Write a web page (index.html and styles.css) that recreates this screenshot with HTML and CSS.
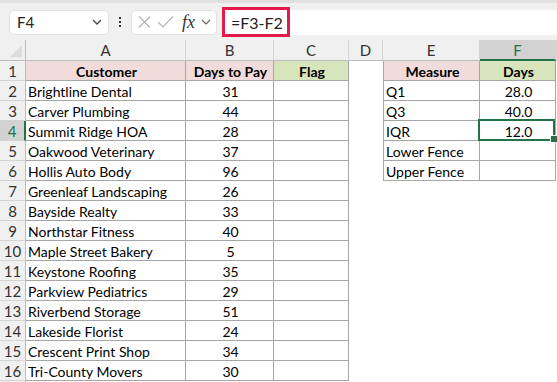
FILE: index.html
```html
<!DOCTYPE html>
<html>
<head lang="en">
    <meta charset="UTF-8">
    <title>IQR</title>
    <link rel="stylesheet" href="styles.css">
</head>
<body>
<div class="bar">
    <div class="namebox">
        <span>F4</span>
        <svg class="chev" width="10" height="6" viewBox="0 0 10 6"><path d="M1 1l4 4 4-4" fill="none" stroke="#444" stroke-width="1.3"/></svg>
    </div>
    <div class="dots"><i></i><i></i><i></i></div>
    <div class="fxbox">
        <svg width="13" height="12" viewBox="0 0 13 12"><path d="M1 0.5l11 11M12 0.5l-11 11" stroke="#b4b4b4" stroke-width="1.2"/></svg>
        <svg width="17" height="12" viewBox="0 0 17 12"><path d="M1 6l5 5 10-10.5" fill="none" stroke="#b4b4b4" stroke-width="1.2"/></svg>
        <span class="fx">fx</span>
        <svg class="chev" width="10" height="6" viewBox="0 0 10 6"><path d="M1 1l4 4 4-4" fill="none" stroke="#666" stroke-width="1.2"/></svg>
    </div>
    <div class="formula">
        <span class="hl">=F3-F2</span>
    </div>
</div>

<div class="sheet">
    <div class="corner"></div>
    <div class="ch">A</div><div class="ch">B</div><div class="ch">C</div><div class="ch">D</div><div class="ch">E</div><div class="ch sel">F</div><div class="ch"></div>

    <div class="rh">1</div>
    <div class="b hp">Customer</div><div class="b hp">Days to Pay</div><div class="b hg">Flag</div><div></div>
    <div class="b bl hp">Measure</div><div class="b hg">Days</div><div></div>

    <div class="rh">2</div>
    <div class="b">Brightline Dental</div><div class="b num">31</div><div class="b"></div><div></div>
    <div class="b bl">Q1</div><div class="b num">28.0</div><div></div>

    <div class="rh">3</div>
    <div class="b">Carver Plumbing</div><div class="b num">44</div><div class="b"></div><div></div>
    <div class="b bl">Q3</div><div class="b num">40.0</div><div></div>

    <div class="rh sel">4</div>
    <div class="b">Summit Ridge HOA</div><div class="b num">28</div><div class="b"></div><div></div>
    <div class="b bl">IQR</div><div class="b num active">12.0</div><div></div>

    <div class="rh">5</div>
    <div class="b">Oakwood Veterinary</div><div class="b num">37</div><div class="b"></div><div></div>
    <div class="b bl">Lower Fence</div><div class="b num"></div><div></div>

    <div class="rh">6</div>
    <div class="b">Hollis Auto Body</div><div class="b num">96</div><div class="b"></div><div></div>
    <div class="b bl">Upper Fence</div><div class="b num"></div><div></div>

    <div class="rh">7</div>
    <div class="b">Greenleaf Landscaping</div><div class="b num">26</div><div class="b"></div><div></div><div></div><div></div><div></div>

    <div class="rh">8</div>
    <div class="b">Bayside Realty</div><div class="b num">33</div><div class="b"></div><div></div><div></div><div></div><div></div>

    <div class="rh">9</div>
    <div class="b">Northstar Fitness</div><div class="b num">40</div><div class="b"></div><div></div><div></div><div></div><div></div>

    <div class="rh">10</div>
    <div class="b">Maple Street Bakery</div><div class="b num">5</div><div class="b"></div><div></div><div></div><div></div><div></div>

    <div class="rh">11</div>
    <div class="b">Keystone Roofing</div><div class="b num">35</div><div class="b"></div><div></div><div></div><div></div><div></div>

    <div class="rh">12</div>
    <div class="b">Parkview Pediatrics</div><div class="b num">29</div><div class="b"></div><div></div><div></div><div></div><div></div>

    <div class="rh">13</div>
    <div class="b">Riverbend Storage</div><div class="b num">51</div><div class="b"></div><div></div><div></div><div></div><div></div>

    <div class="rh">14</div>
    <div class="b">Lakeside Florist</div><div class="b num">24</div><div class="b"></div><div></div><div></div><div></div><div></div>

    <div class="rh">15</div>
    <div class="b">Crescent Print Shop</div><div class="b num">34</div><div class="b"></div><div></div><div></div><div></div><div></div>

    <div class="rh">16</div>
    <div class="b">Tri-County Movers</div><div class="b num">30</div><div class="b"></div><div></div><div></div><div></div><div></div>

    <div class="rh"></div>
</div>
</body>
</html>
```

FILE: styles.css
```css
* {
    margin: 0;
    padding: 0;
    box-sizing: border-box;
}

body {
    width: 557px;
    height: 382px;
    overflow: hidden;
    background: #fff;
    font-family: Lato, "Liberation Sans", sans-serif;
    color: #000;
}

/* formula bar */
.bar {
    height: 40px;
    background: #f0f0f0;
    border-top: 3px solid #e1e1e1;
    display: flex;
    align-items: center;
    padding-left: 9px;
    padding-top: 1px;
}

.namebox {
    width: 100px;
    height: 25px;
    background: #fff;
    border: 1px solid #e2e2e2;
    border-radius: 5px;
    display: flex;
    align-items: center;
    justify-content: space-between;
    padding: 0 6px 0 7px;
    font-size: 15px;
    color: #222;
}

.dots {
    width: 22px;
    display: flex;
    flex-direction: column;
    align-items: center;
    gap: 2px;
}

.dots i {
    width: 2px;
    height: 2px;
    background: #333;
}

.fxbox {
    width: 86px;
    height: 25px;
    background: #fff;
    border: 1px solid #e2e2e2;
    border-radius: 5px;
    display: flex;
    align-items: center;
    padding-left: 6px;
    gap: 6px;
}

.fxbox svg {
    flex: none;
}

.fx {
    font-family: "Liberation Serif", serif;
    font-style: italic;
    font-size: 18px;
    color: #333;
    margin-left: 2px;
}

.formula {
    flex: 1;
    height: 25px;
    margin-left: 5px;
    background: #fff;
    display: flex;
    align-items: center;
}

.hl {
    height: 30px;
    width: 68px;
    border: 3px solid #e5194b;
    font-size: 16px;
    color: #222;
    display: flex;
    align-items: center;
    padding-left: 6px;
    flex: none;
}

/* grid */
.sheet {
    display: grid;
    grid-template-columns: 26px 160px 88px 75px 34px 97px 76px 1fr;
    grid-template-rows: 21px;
    grid-auto-rows: 20px;
    font-size: 14px;
    line-height: 21px;
}

.sheet div {
    white-space: nowrap;
    overflow: hidden;
}

.corner {
    background: #f0f0f0;
    border-right: 1px solid #bcbcbc;
    border-bottom: 1px solid #bcbcbc;
    position: relative;
}

.corner::after {
    content: "";
    position: absolute;
    right: 3px;
    bottom: 3px;
    border-left: 12px solid transparent;
    border-bottom: 12px solid #dcdcdc;
}

.ch {
    background: #f0f0f0;
    border-right: 1px solid #d4d4d4;
    border-bottom: 1px solid #bcbcbc;
    text-align: center;
    color: #333;
    font-size: 15px;
}

.ch.sel {
    background: #d2d2d2;
    border-bottom: 2px solid #217346;
    color: #217346;
}

.rh {
    background: #f0f0f0;
    border-right: 1px solid #bcbcbc;
    border-bottom: 1px solid #d4d4d4;
    text-align: center;
    color: #333;
    font-size: 15px;
}

.rh.sel {
    background: #d2d2d2;
    border-right: 2px solid #217346;
    color: #217346;
}

.b {
    border-right: 1px solid #a6a6a6;
    border-bottom: 1px solid #a6a6a6;
    padding-left: 2px;
}

.bl {
    border-left: 1px solid #a6a6a6;
}

.hp {
    background: #f2dcdb;
    font-weight: bold;
    text-align: center;
}

.hg {
    background: #d8e4bc;
    font-weight: bold;
    text-align: center;
}

.num {
    text-align: center;
}

.sheet .active {
    overflow: visible;
    position: relative;
}

.active::after {
    content: "";
    position: absolute;
    top: -2px;
    left: -2px;
    right: 0;
    bottom: -1px;
    border: 2px solid #217346;
}

.active::before {
    content: "";
    position: absolute;
    right: -3px;
    bottom: -3px;
    width: 6px;
    height: 6px;
    background: #217346;
    border: 1px solid #fff;
    z-index: 1;
}
```
